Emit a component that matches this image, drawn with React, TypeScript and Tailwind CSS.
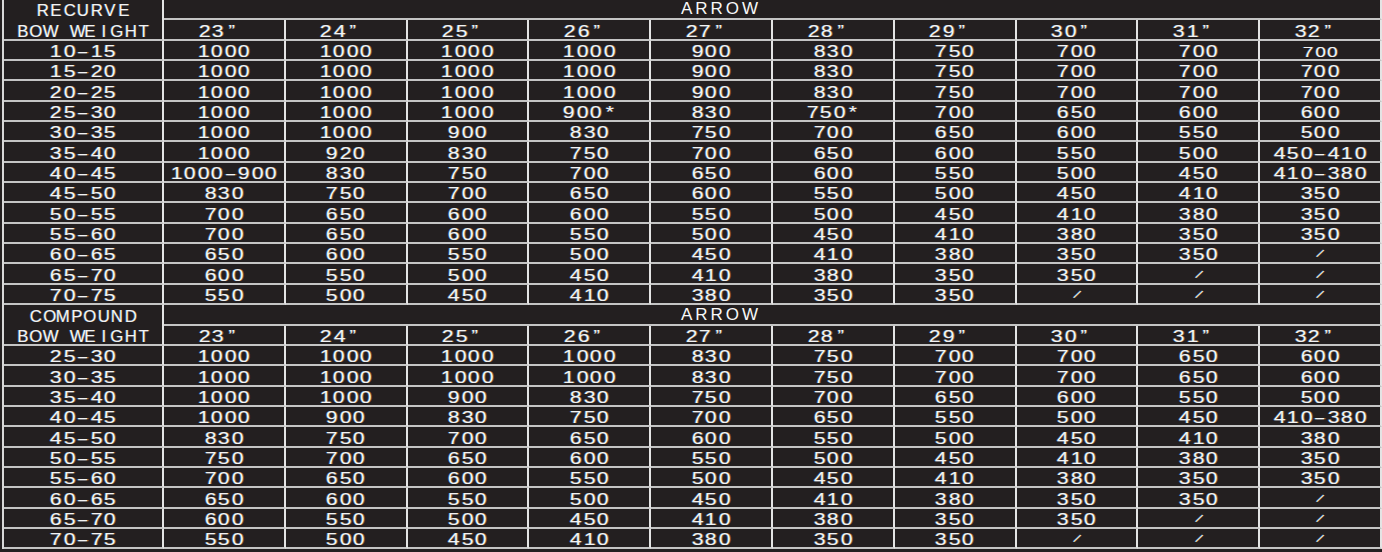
import React from "react";

const recurve: [string, string[]][] = [
  ["10-15", ["1000", "1000", "1000", "1000", "900", "830", "750", "700", "700", "700"]],
  ["15-20", ["1000", "1000", "1000", "1000", "900", "830", "750", "700", "700", "700"]],
  ["20-25", ["1000", "1000", "1000", "1000", "900", "830", "750", "700", "700", "700"]],
  ["25-30", ["1000", "1000", "1000", "900*", "830", "750*", "700", "650", "600", "600"]],
  ["30-35", ["1000", "1000", "900", "830", "750", "700", "650", "600", "550", "500"]],
  ["35-40", ["1000", "920", "830", "750", "700", "650", "600", "550", "500", "450-410"]],
  ["40-45", ["1000-900", "830", "750", "700", "650", "600", "550", "500", "450", "410-380"]],
  ["45-50", ["830", "750", "700", "650", "600", "550", "500", "450", "410", "350"]],
  ["50-55", ["700", "650", "600", "600", "550", "500", "450", "410", "380", "350"]],
  ["55-60", ["700", "650", "600", "550", "500", "450", "410", "380", "350", "350"]],
  ["60-65", ["650", "600", "550", "500", "450", "410", "380", "350", "350", "/"]],
  ["65-70", ["600", "550", "500", "450", "410", "380", "350", "350", "/", "/"]],
  ["70-75", ["550", "500", "450", "410", "380", "350", "350", "/", "/", "/"]],
];

const compound: [string, string[]][] = [
  ["25-30", ["1000", "1000", "1000", "1000", "830", "750", "700", "700", "650", "600"]],
  ["30-35", ["1000", "1000", "1000", "1000", "830", "750", "700", "700", "650", "600"]],
  ["35-40", ["1000", "1000", "900", "830", "750", "700", "650", "600", "550", "500"]],
  ["40-45", ["1000", "900", "830", "750", "700", "650", "550", "500", "450", "410-380"]],
  ["45-50", ["830", "750", "700", "650", "600", "550", "500", "450", "410", "380"]],
  ["50-55", ["750", "700", "650", "600", "550", "500", "450", "410", "380", "350"]],
  ["55-60", ["700", "650", "600", "550", "500", "450", "410", "380", "350", "350"]],
  ["60-65", ["650", "600", "550", "500", "450", "410", "380", "350", "350", "/"]],
  ["65-70", ["600", "550", "500", "450", "410", "380", "350", "350", "/", "/"]],
  ["70-75", ["550", "500", "450", "410", "380", "350", "350", "/", "/", "/"]],
];

const lengths = ["23”", "24”", "25”", "26”", "27”", "28”", "29”", "30”", "31”", "32”"];

function charClass(c: string): string {
  if (c === "-") return "scale-x-[2.3]";
  if (c === "/") return "rotate-[30deg] text-[13px] -translate-y-[1px]";
  if (c === "*") return "scale-x-[1.3]";
  if (c === "”") return "scale-x-[1.2]";
  if (/[0-9]/.test(c)) return "scale-x-[1.33]";
  return "scale-x-[1.05]";
}

function Mono({ text, small }: { text: string; small?: boolean }) {
  return (
    <span className={small ? "inline-flex scale-[0.9] origin-bottom" : "inline-flex"}>
      {text.split("").map((c, i) => (
        <span key={i} className={`inline-block w-[13.5px] text-center ${charClass(c)}`}>
          {c === " " ? "\u00a0" : c}
        </span>
      ))}
    </span>
  );
}

const cellBase =
  "flex items-end justify-center border-b-2 border-r-2 border-b-[#c4c4c4] border-r-[#e4e4e4] leading-[14px]";

function Section({ kind, rows }: { kind: string; rows: [string, string[]][] }) {
  return (
    <>
      <div className="row-span-2 flex flex-col border-b-2 border-r-2 border-b-[#c4c4c4] border-r-[#e4e4e4]">
        <div className="flex flex-1 items-end justify-center leading-[14px] pb-[2px]">
          <Mono text={kind} />
        </div>
        <div className="flex flex-1 items-end justify-center leading-[14px]">
          <Mono text="BOW WEIGHT" />
        </div>
      </div>
      <div className="col-span-10 flex items-end justify-center border-b-2 border-r-2 border-b-[#c4c4c4] border-r-[#e4e4e4] pr-[102px] pb-[1px] leading-[17px] text-[17px] tracking-[3px] [text-shadow:none] text-[#f8f8f8]">
        ARROW
      </div>
      {lengths.map((l) => (
        <div key={kind + l} className={cellBase + " pr-[12px]"}>
          <Mono text={l} />
        </div>
      ))}
      {rows.map(([w, vals], ri) => (
        <React.Fragment key={kind + w}>
          <div className={cellBase}>
            <Mono text={w} />
          </div>
          {vals.map((v, i) => (
            <div key={i} className={cellBase}>
              <Mono text={v} small={kind === "RECURVE" && ri === 0 && i === 9} />
            </div>
          ))}
        </React.Fragment>
      ))}
    </>
  );
}

export default function App() {
  return (
    <div className="w-[1382px] h-[552px] bg-[#231f20] pl-[2px] text-[16px] text-[#f2f2f2] font-['Liberation_Sans',Arial,sans-serif] [text-shadow:-0.6px_0_rgba(70,150,230,0.5),0.6px_0_rgba(235,160,70,0.45)] overflow-hidden">
      <div className="grid w-[1380px] grid-cols-[160px_repeat(10,minmax(0,1fr))] auto-rows-[20.35px] border-l-2 border-l-[#d8d8d8]">
        <Section kind="RECURVE" rows={recurve} />
        <Section kind="COMPOUND" rows={compound} />
      </div>
    </div>
  );
}
